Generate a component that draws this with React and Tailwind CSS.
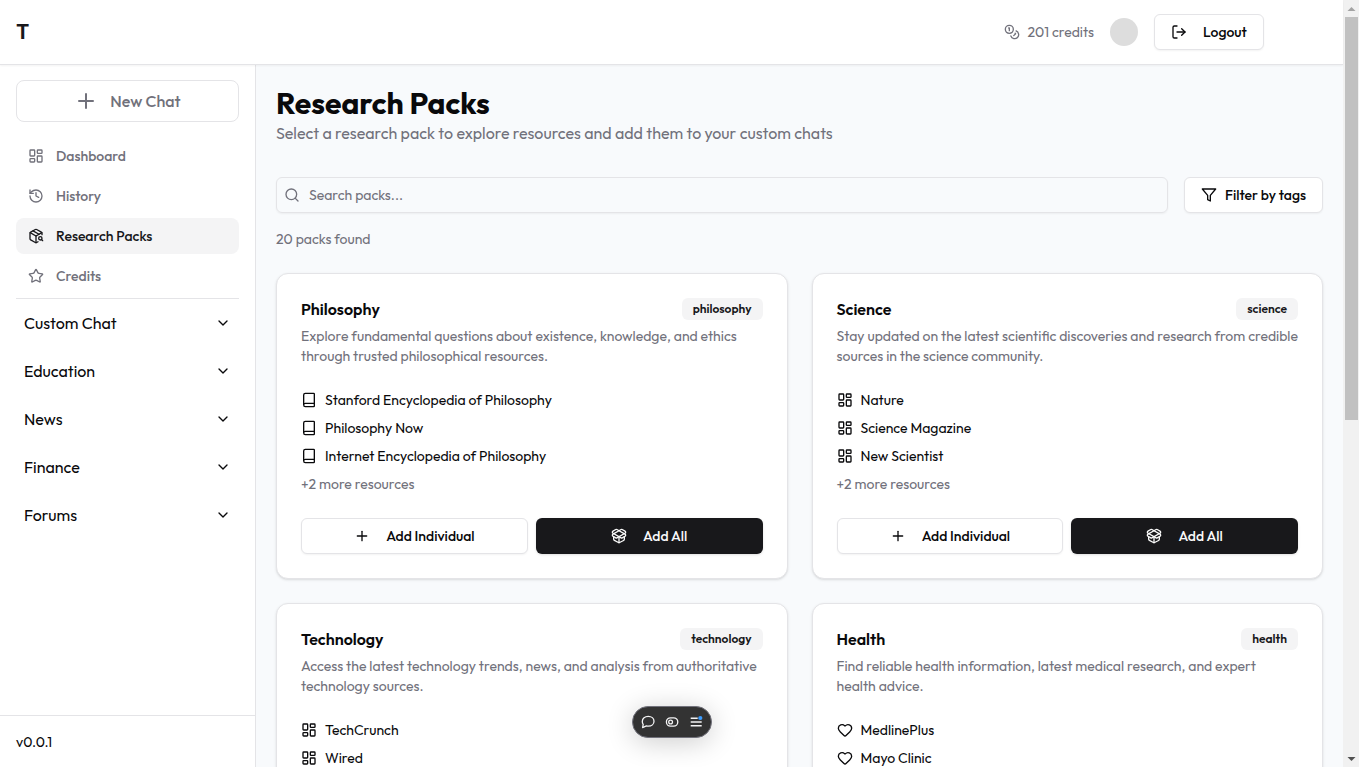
import {
  Book,
  ChevronDown,
  Coins,
  Heart,
  History,
  LayoutDashboard,
  LogOut,
  PackageOpen,
  PackageSearch,
  Plus,
  Search,
  Star,
} from "lucide-react";

const NAV = [
  { label: "Dashboard", icon: LayoutDashboard },
  { label: "History", icon: History },
  { label: "Research Packs", icon: PackageSearch, active: true },
  { label: "Credits", icon: Star },
];

const SECTIONS = ["Custom Chat", "Education", "News", "Finance", "Forums"];

const PACKS = [
  {
    title: "Philosophy",
    tag: "philosophy",
    icon: Book,
    text: "Explore fundamental questions about existence, knowledge, and ethics through trusted philosophical resources.",
    items: ["Stanford Encyclopedia of Philosophy", "Philosophy Now", "Internet Encyclopedia of Philosophy"],
    more: "+2 more resources",
  },
  {
    title: "Science",
    tag: "science",
    icon: LayoutDashboard,
    text: "Stay updated on the latest scientific discoveries and research from credible sources in the science community.",
    items: ["Nature", "Science Magazine", "New Scientist"],
    more: "+2 more resources",
  },
  {
    title: "Technology",
    tag: "technology",
    icon: LayoutDashboard,
    text: "Access the latest technology trends, news, and analysis from authoritative technology sources.",
    items: ["TechCrunch", "Wired"],
  },
  {
    title: "Health",
    tag: "health",
    icon: Heart,
    text: "Find reliable health information, latest medical research, and expert health advice.",
    items: ["MedlinePlus", "Mayo Clinic"],
  },
];

function FilterIcon() {
  return (
    <svg className="size-4" viewBox="0 0 24 24" fill="none" stroke="currentColor" strokeWidth="2" strokeLinecap="round" strokeLinejoin="round" aria-hidden="true">
      <polygon points="22 3 2 3 10 12.46 10 19 14 21 14 12.46 22 3" />
    </svg>
  );
}

function Header() {
  return (
    <header className="z-10 flex h-[65px] shrink-0 items-center justify-between border-b border-zinc-200 bg-white pr-[79px] pl-4 shadow-xs">
      <a href="#" className="font-['Inter',sans-serif] text-xl font-bold text-zinc-900">T</a>
      <div className="flex items-center gap-4">
        <div className="flex items-center gap-[7px] text-sm text-zinc-500">
          <Coins className="size-4" />
          <span>201 credits</span>
        </div>
        <div className="size-7 rounded-full bg-[#dddddd]" />
        <button type="button" className="flex h-9 w-[110px] items-center justify-center gap-4 rounded-md border border-zinc-200 bg-white text-sm font-medium shadow-xs">
          <LogOut className="size-4" />
          Logout
        </button>
      </div>
    </header>
  );
}

function Sidebar() {
  return (
    <aside className="flex w-64 shrink-0 flex-col border-r border-zinc-200 bg-white">
      <div className="flex-1 px-4 pt-[15px]">
        <button type="button" className="flex h-[42px] w-full items-center justify-center gap-3 rounded-lg border border-zinc-200 font-medium text-zinc-500">
          <Plus className="size-6" />
          New Chat
        </button>
        <nav className="mt-4 flex flex-col gap-1 border-b border-zinc-200 pb-1">
          {NAV.map(({ label, icon: Icon, active }) => (
            <a
              key={label}
              href="#"
              className={
                active
                  ? "flex h-9 items-center gap-3 rounded-lg bg-zinc-100 px-3 text-sm font-medium text-zinc-900"
                  : "flex h-9 items-center gap-3 rounded-lg px-3 text-sm font-medium text-zinc-500"
              }
            >
              <Icon className="size-4" />
              {label}
            </a>
          ))}
        </nav>
        {SECTIONS.map((label) => (
          <button key={label} type="button" className="flex h-12 w-full items-center justify-between px-2 text-left">
            {label}
            <ChevronDown className="size-4" />
          </button>
        ))}
      </div>
      <div className="flex h-[52px] shrink-0 items-center border-t border-zinc-200 px-4 text-sm">v0.0.1</div>
    </aside>
  );
}

function PackCard({ pack }) {
  const Icon = pack.icon;
  return (
    <article className="flex flex-col rounded-xl border border-zinc-200 bg-white p-6 shadow-sm">
      <div className="flex h-[22px] items-center justify-between">
        <h2 className="font-semibold">{pack.title}</h2>
        <span className="flex h-[22px] items-center rounded-md bg-zinc-100 px-[11px] text-xs font-semibold text-zinc-900">{pack.tag}</span>
      </div>
      <p className="mt-1.5 text-sm text-zinc-500">{pack.text}</p>
      <ul className="mt-6 flex flex-col gap-2 text-sm">
        {pack.items.map((item) => (
          <li key={item} className="flex items-center gap-2">
            <Icon className="size-4" />
            {item}
          </li>
        ))}
        {pack.more && <li className="text-zinc-500">{pack.more}</li>}
      </ul>
      {pack.more && (
        <div className="mt-6 grid grid-cols-2 gap-2 text-sm font-medium">
          <button type="button" className="flex h-9 items-center justify-center gap-4 rounded-md border border-zinc-200 bg-white shadow-xs">
            <Plus className="size-4" />
            Add Individual
          </button>
          <button type="button" className="flex h-9 items-center justify-center gap-4 rounded-md bg-zinc-900 text-zinc-50 shadow-sm">
            <PackageOpen className="size-4" />
            Add All
          </button>
        </div>
      )}
    </article>
  );
}

function Scrollbar() {
  return (
    <div className="flex h-full w-4 shrink-0 flex-col items-center bg-[#f1f1f1]" aria-hidden="true">
      <svg className="h-[17px] w-4 shrink-0" viewBox="0 0 16 17">
        <path d="M4.500 11h8L8.500 7z" fill="#a3a3a3" />
      </svg>
      <div className="h-[403px] w-[13px] bg-[#c1c1c1]" />
      <svg className="mt-auto h-[17px] w-4 shrink-0" viewBox="0 0 16 17">
        <path d="M4.500 7h8l-4 4z" fill="#505050" />
      </svg>
    </div>
  );
}

function Toolbar() {
  return (
    <div className="absolute top-[706px] left-1/2 z-20 flex h-8 w-20 -translate-x-1/2 items-center justify-center gap-2 rounded-full border border-zinc-500 bg-[#333333] text-zinc-100 shadow-[0_4px_28px_rgba(0,0,0,0.2)]">
      <button type="button" aria-label="Comment">
        <svg className="size-4" viewBox="0 0 16 16" fill="none" stroke="currentColor" strokeWidth="1.3" strokeLinejoin="round">
          <path d="M2.600 13.600 3.200 10.400A5.300 5.300 0 0 1 2.300 7.400C2.300 4.400 4.900 2.300 8.200 2.300S14 4.400 14 7.200 11.600 12.200 8.400 12.200c-.9 0-1.400-.1-2-.3z" />
        </svg>
      </button>
      <button type="button" aria-label="Draft mode">
        <svg className="size-4" viewBox="0 0 16 16" fill="none" stroke="currentColor" strokeWidth="1.3">
          <rect x="2.400" y="3.800" width="11.400" height="8.400" rx="4.200" />
          <circle cx="6.600" cy="8" r="1.900" />
        </svg>
      </button>
      <button type="button" aria-label="Menu">
        <svg className="size-4" viewBox="0 0 16 16" fill="none" stroke="currentColor" strokeWidth="1.400">
          <path d="M2.700 4.300h7M2.700 8h11M2.700 11.700h11" />
          <circle cx="12.300" cy="4" r="2.100" fill="#3b9cff" stroke="none" />
        </svg>
      </button>
    </div>
  );
}

export default function App() {
  return (
    <div className="flex h-screen overflow-hidden bg-white font-['Outfit','Lato',sans-serif] text-zinc-950">
      <div className="relative flex min-w-0 flex-1 flex-col">
        <Header />
        <div className="flex min-h-0 flex-1">
          <Sidebar />
          <main className="min-w-0 flex-1 overflow-hidden bg-slate-50 p-5">
            <h1 className="text-3xl font-bold">Research Packs</h1>
            <p className="text-zinc-500">Select a research pack to explore resources and add them to your custom chats</p>
            <div className="mt-8 flex gap-4">
              <div className="relative flex-1">
                <label htmlFor="pack-search" className="absolute top-2.5 left-2 text-zinc-500">
                  <Search className="size-4" aria-label="Search packs" />
                </label>
                <input
                  id="pack-search"
                  type="text"
                  placeholder="Search packs..."
                  className="h-9 w-full rounded-md border border-zinc-200 bg-transparent py-1 pr-3 pl-8 text-sm shadow-xs outline-none placeholder:text-zinc-500"
                />
              </div>
              <button type="button" className="flex h-9 w-[139px] items-center justify-center gap-2 rounded-md border border-zinc-200 bg-white text-sm font-medium shadow-xs">
                <FilterIcon />
                Filter by tags
              </button>
            </div>
            <p className="mt-4 text-sm text-zinc-500">20 packs found</p>
            <div className="mt-6 grid grid-cols-2 gap-6">
              {PACKS.map((pack) => (
                <PackCard key={pack.title} pack={pack} />
              ))}
            </div>
          </main>
        </div>
        <Toolbar />
      </div>
      <Scrollbar />
    </div>
  );
}
